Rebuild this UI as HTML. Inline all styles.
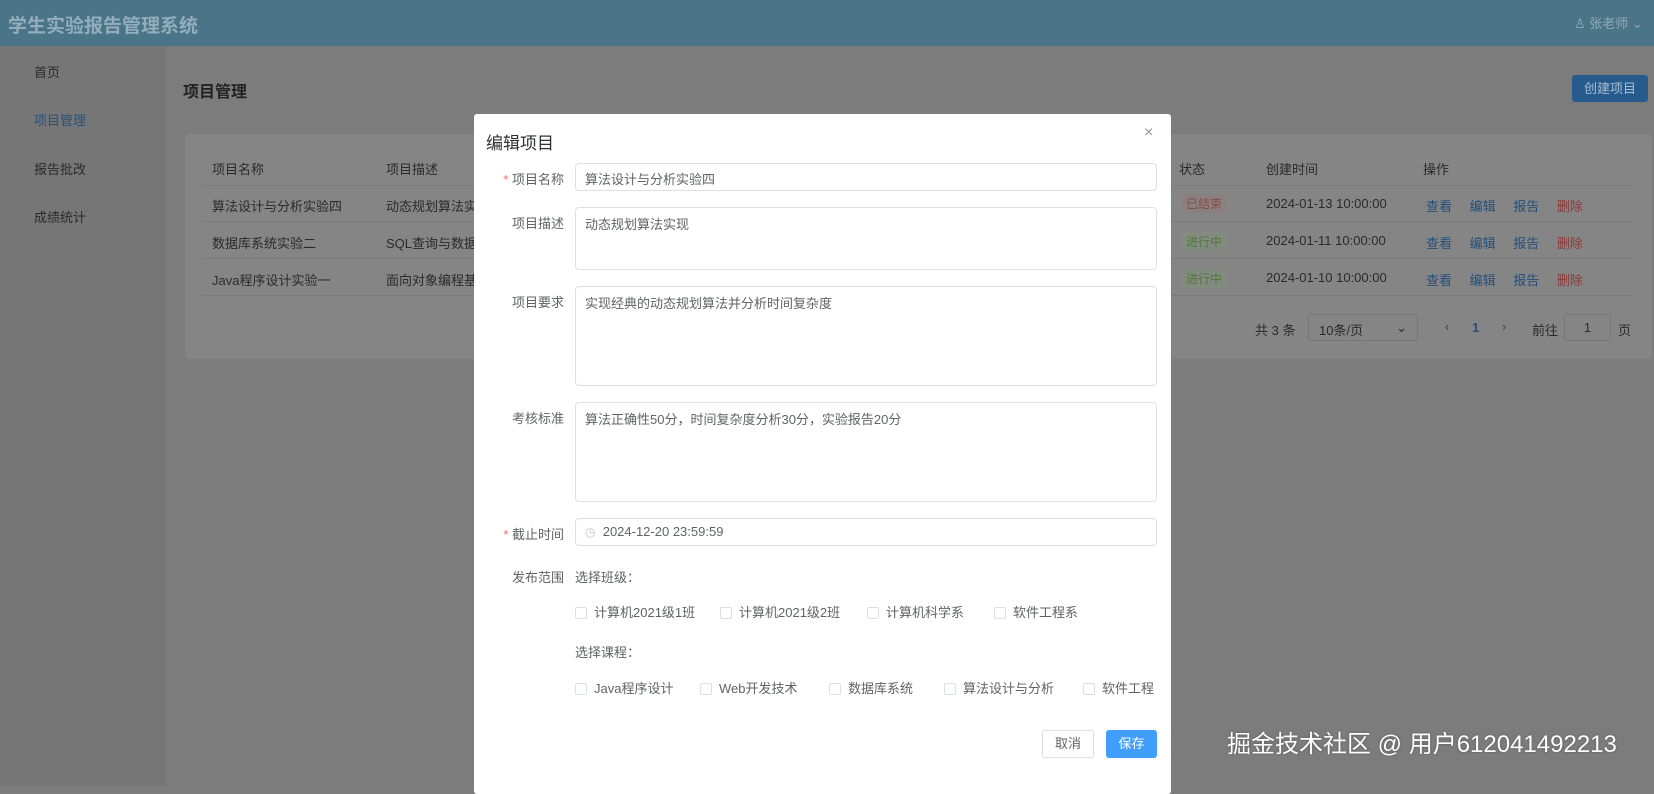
<!DOCTYPE html>
<html><head><meta charset="utf-8"><style>
*{box-sizing:border-box;margin:0;padding:0}
body{width:1654px;height:776px;overflow:hidden;position:relative;background:#7c7c7c;font-family:"Liberation Sans","Noto Sans CJK SC",sans-serif;font-size:13px;color:#333}
.a{position:absolute;white-space:nowrap}
.hdr{left:0;top:0;width:1654px;height:46px;background:#4a7488}
.side{left:0;top:46px;width:166px;height:740px;background:#767676}
.card{left:185px;top:134px;width:1467px;height:225px;background:#858585;border-radius:4px}
.g{color:#2a2a2a}
.line{height:1px;background:#7b7b7b}
.modal{left:474px;top:114px;width:697px;height:680px;background:#fff;border-radius:3px}
.in{position:absolute;border:1px solid #dcdfe6;border-radius:4px;background:#fff;color:#606266;padding:6px 9px;font-size:13px}
.lb{position:absolute;width:90px;text-align:right;color:#606266;font-size:13px}
.cb{position:absolute;color:#606266;font-size:13px;white-space:nowrap}
.cb i{display:inline-block;width:12px;height:12px;border:1px solid #dcdfe6;border-radius:2px;vertical-align:-2px;margin-right:7px}
</style></head><body>
<div class="a hdr"></div>
<div class="a" style="left:8px;top:11px;font-size:19px;font-weight:bold;color:#93adba">学生实验报告管理系统</div>
<div class="a" style="left:1574px;top:13px;font-size:13px;color:#95aab5">♙ 张老师 ⌄</div>
<div class="a side"></div>
<div class="a g" style="left:34px;top:62px">首页</div>
<div class="a" style="left:34px;top:110px;color:#28517a">项目管理</div>
<div class="a g" style="left:34px;top:159px">报告批改</div>
<div class="a g" style="left:34px;top:207px">成绩统计</div>
<div class="a" style="left:183px;top:78px;font-size:16px;font-weight:bold;color:#222">项目管理</div>
<div class="a" style="left:1572px;top:75px;width:76px;height:27px;background:#275b8e;border-radius:3px;color:#a9bdd0;text-align:center;line-height:27px">创建项目</div>
<div class="a card"></div>
<div class="a g" style="left:212px;top:159px">项目名称</div>
<div class="a g" style="left:386px;top:159px">项目描述</div>
<div class="a g" style="left:1179px;top:159px">状态</div>
<div class="a g" style="left:1266px;top:159px">创建时间</div>
<div class="a g" style="left:1423px;top:159px">操作</div>
<div class="a line" style="left:202px;top:185px;width:1430px"></div>
<div class="a g" style="left:212px;top:196px">算法设计与分析实验四</div>
<div class="a g" style="left:386px;top:196px">动态规划算法实</div>
<div class="a line" style="left:202px;top:221px;width:1430px"></div>
<div class="a g" style="left:212px;top:233px">数据库系统实验二</div>
<div class="a g" style="left:386px;top:233px">SQL查询与数据</div>
<div class="a line" style="left:202px;top:258px;width:1430px"></div>
<div class="a g" style="left:212px;top:270px">Java程序设计实验一</div>
<div class="a g" style="left:386px;top:270px">面向对象编程基</div>
<div class="a line" style="left:202px;top:295px;width:1430px"></div>
<div class="a" style="left:1181px;top:194px;padding:1px 5px;background:#8a8080;color:#8a4a4a;font-size:12px">已结束</div>
<div class="a" style="left:1181px;top:232px;padding:1px 5px;background:#838a80;color:#4f7a3a;font-size:12px">进行中</div>
<div class="a" style="left:1181px;top:269px;padding:1px 5px;background:#838a80;color:#4f7a3a;font-size:12px">进行中</div>
<div class="a g" style="left:1266px;top:196px">2024-01-13 10:00:00</div>
<div class="a g" style="left:1266px;top:233px">2024-01-11 10:00:00</div>
<div class="a g" style="left:1266px;top:270px">2024-01-10 10:00:00</div>
<div class="a" style="left:1426px;top:196px;color:#24507c;word-spacing:14px">查看 编辑 报告 <span style="color:#8a3a3a">删除</span></div>
<div class="a" style="left:1426px;top:233px;color:#24507c;word-spacing:14px">查看 编辑 报告 <span style="color:#8a3a3a">删除</span></div>
<div class="a" style="left:1426px;top:270px;color:#24507c;word-spacing:14px">查看 编辑 报告 <span style="color:#8a3a3a">删除</span></div>
<div class="a g" style="left:1255px;top:320px">共 3 条</div>
<div class="a" style="left:1308px;top:314px;width:110px;height:27px;border:1px solid #777;border-radius:3px;padding:5px 10px;color:#2a2a2a">10条/页<span style="position:absolute;right:10px">⌄</span></div>
<div class="a" style="left:1445px;top:319px;color:#444">‹</div>
<div class="a" style="left:1472px;top:320px;color:#24507c;font-weight:bold">1</div>
<div class="a" style="left:1502px;top:319px;color:#444">›</div>
<div class="a g" style="left:1532px;top:320px">前往</div>
<div class="a" style="left:1564px;top:314px;width:47px;height:27px;border:1px solid #777;border-radius:3px;text-align:center;line-height:25px;color:#2a2a2a">1</div>
<div class="a g" style="left:1618px;top:320px">页</div>

<div class="a modal">
<div class="a" style="left:12px;top:15px;font-size:17px;color:#303133">编辑项目</div>
<div class="a" style="left:670px;top:10px;font-size:16px;color:#909399">×</div>
<div class="lb" style="left:0;top:55px"><span style="color:#f56c6c">* </span>项目名称</div>
<div class="in" style="left:101px;top:49px;width:582px;height:28px;padding-top:5px">算法设计与分析实验四</div>
<div class="lb" style="left:0;top:99px">项目描述</div>
<div class="in" style="left:101px;top:93px;width:582px;height:63px">动态规划算法实现</div>
<div class="lb" style="left:0;top:178px">项目要求</div>
<div class="in" style="left:101px;top:172px;width:582px;height:100px">实现经典的动态规划算法并分析时间复杂度</div>
<div class="lb" style="left:0;top:294px">考核标准</div>
<div class="in" style="left:101px;top:288px;width:582px;height:100px">算法正确性50分，时间复杂度分析30分，实验报告20分</div>
<div class="lb" style="left:0;top:410px"><span style="color:#f56c6c">* </span>截止时间</div>
<div class="in" style="left:101px;top:404px;width:582px;height:28px;padding-top:5px"><span style="color:#c0c4cc;font-size:12px">◷</span>&nbsp; 2024-12-20 23:59:59</div>
<div class="lb" style="left:0;top:453px">发布范围</div>
<div class="cb" style="left:101px;top:453px">选择班级：</div>
<div class="cb" style="left:101px;top:488px"><i></i>计算机2021级1班</div>
<div class="cb" style="left:246px;top:488px"><i></i>计算机2021级2班</div>
<div class="cb" style="left:393px;top:488px"><i></i>计算机科学系</div>
<div class="cb" style="left:520px;top:488px"><i></i>软件工程系</div>
<div class="cb" style="left:101px;top:528px">选择课程：</div>
<div class="cb" style="left:101px;top:564px"><i></i>Java程序设计</div>
<div class="cb" style="left:226px;top:564px"><i></i>Web开发技术</div>
<div class="cb" style="left:355px;top:564px"><i></i>数据库系统</div>
<div class="cb" style="left:470px;top:564px"><i></i>算法设计与分析</div>
<div class="cb" style="left:609px;top:564px"><i></i>软件工程</div>
<div class="a" style="left:568px;top:616px;width:52px;height:28px;border:1px solid #dcdfe6;border-radius:3px;text-align:center;line-height:26px;color:#606266">取消</div>
<div class="a" style="left:632px;top:616px;width:51px;height:28px;background:#409eff;border-radius:3px;text-align:center;line-height:28px;color:#fff">保存</div>
</div>
<div class="a" style="left:1227px;top:724px;font-size:24px;color:#fff;text-shadow:0 0 2px #555">掘金技术社区 @ 用户612041492213</div>
</body></html>
